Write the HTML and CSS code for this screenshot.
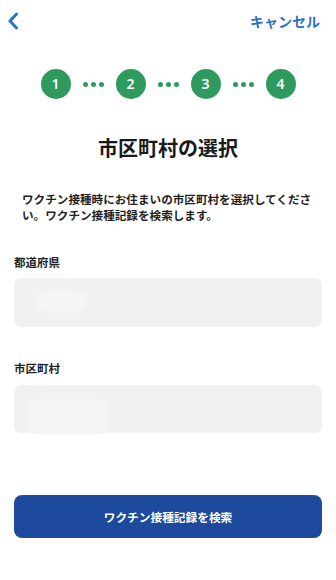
FILE: index.html
```html
<!DOCTYPE html>
<html lang="ja">
<head>
<meta charset="utf-8">
<link rel="stylesheet" href="styles.css">
</head>
<body>
<div class="screen">
  <header class="nav">
    <svg class="back" width="12" height="18" viewBox="0 0 12 18"><path d="M9.5 2 L3 9 L9.5 16" fill="none" stroke="#2a71c8" stroke-width="3" stroke-linecap="round" stroke-linejoin="round"/></svg>
    <span class="cancel">キャンセル</span>
  </header>
  <div class="steps">
    <span class="step">1</span>
    <span class="dots"><i></i><i></i><i></i></span>
    <span class="step">2</span>
    <span class="dots"><i></i><i></i><i></i></span>
    <span class="step">3</span>
    <span class="dots"><i></i><i></i><i></i></span>
    <span class="step">4</span>
  </div>
  <h1 class="title">市区町村の選択</h1>
  <p class="desc">ワクチン接種時にお住まいの市区町村を選択してください。ワクチン接種記録を検索します。</p>
  <div class="form">
    <div class="label first">都道府県</div>
    <div class="field"><span class="blur b1"></span></div>
    <div class="label">市区町村</div>
    <div class="field f2"><span class="blur b2"></span></div>
    <button class="submit">ワクチン接種記録を検索</button>
  </div>
</div>
</body>
</html>
```
FILE: styles.css
```css
* { box-sizing: border-box; }
html, body { margin: 0; padding: 0; background: #fff; }
body {
  font-family: "Noto Sans CJK JP", "Noto Sans", sans-serif;
  color: #1a1a1a;
  width: 336px;
}
.screen { width: 336px; height: 580px; overflow: hidden; }
.nav {
  height: 40px;
  display: flex;
  align-items: center;
  justify-content: space-between;
  padding: 2px 16px 0 7px;
}
.back { display: block; }
.cancel {
  font-size: 14px;
  font-weight: 700;
  color: #2a71c8;
  line-height: 20px;
}
.steps {
  margin-top: 29px;
  height: 30px;
  display: flex;
  justify-content: center;
  align-items: center;
}
.step {
  width: 30px;
  height: 30px;
  border-radius: 50%;
  background: #2e9a5e;
  color: #fff;
  font-family: "Noto Sans", sans-serif;
  font-weight: 600;
  font-size: 14px;
  line-height: 30px;
  text-align: center;
}
.dots {
  width: 45px;
  display: flex;
  justify-content: center;
  gap: 3px;
}
.dots i {
  width: 5px;
  height: 5px;
  border-radius: 50%;
  background: #2e9a5e;
}
.title {
  margin: 35px 0 0;
  font-size: 20px;
  line-height: 28px;
  font-weight: 700;
  text-align: center;
  color: #1a1a1a;
}
.desc {
  margin: 29px 0 0;
  padding: 0 22px;
  font-size: 11.6px;
  line-height: 16px;
  font-weight: 700;
  color: #1f1f1f;
}
.form { padding: 0 14px; }
.label {
  margin-top: 33px;
  font-size: 11.5px;
  line-height: 16px;
  font-weight: 700;
  color: #1f1f1f;
}
.label.first { margin-top: 31px; }
.field {
  position: relative;
  margin-top: 8px;
  height: 49px;
  border-radius: 7px;
  background: #f1f1f1;
}
.field.f2 { margin-top: 9px; height: 48px; }
.blur {
  position: absolute;
  background: #f5f5f5;
  filter: blur(3px);
  border-radius: 10px;
}
.b1 { left: 22px; top: 12px; width: 52px; height: 22px; }
.b2 { left: 14px; top: 14px; width: 80px; height: 34px; }
.submit {
  display: block;
  width: 100%;
  margin-top: 62px;
  height: 43px;
  border: 0;
  border-radius: 8px;
  background: #1d4a9c;
  color: #fff;
  font-family: "Noto Sans CJK JP", "Noto Sans", sans-serif;
  font-size: 11.7px;
  font-weight: 700;
  line-height: 16px;
  padding: 0;
}
```
